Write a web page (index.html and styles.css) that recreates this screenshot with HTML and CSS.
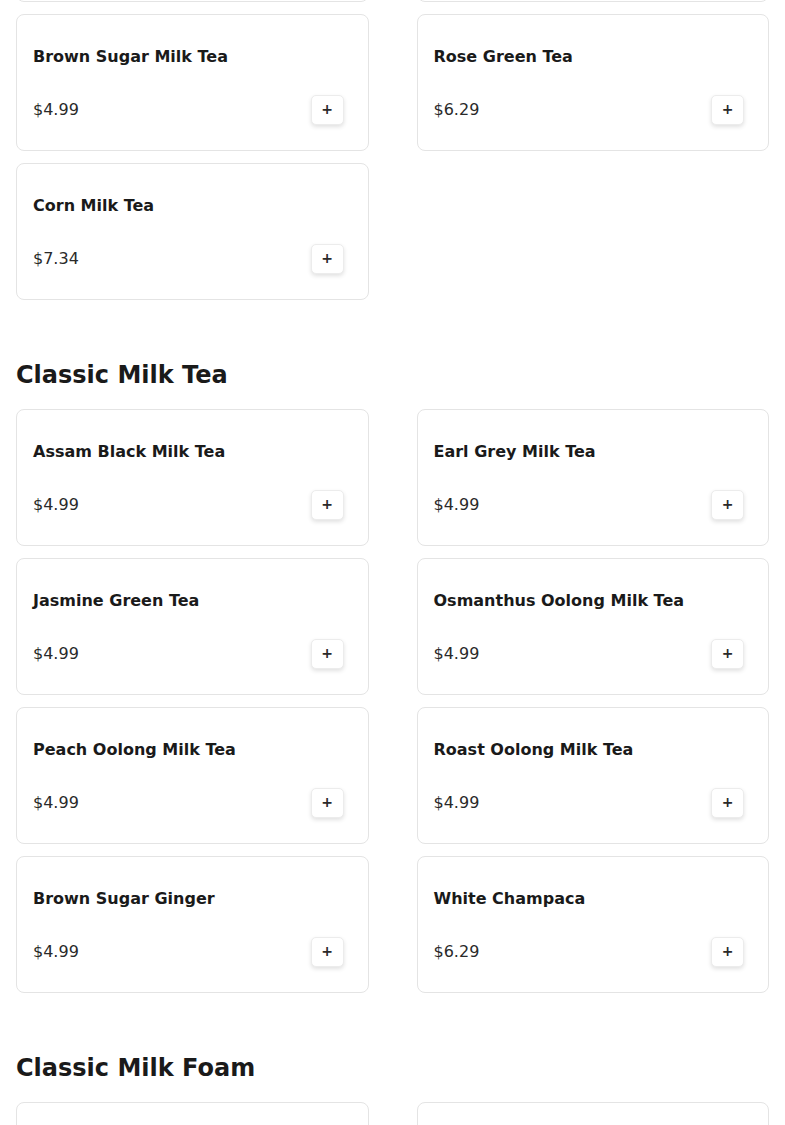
FILE: index.html
```html
<!DOCTYPE html>
<html lang="en">
<head>
<meta charset="utf-8">
<title>Menu</title>
<link rel="stylesheet" href="styles.css">
</head>
<body>
<main class="menu">
  <section class="section section-first">
    <div class="grid">
      <div class="card card-stub" aria-hidden="true"></div>
      <div class="card card-stub" aria-hidden="true"></div>
      <div class="card"><h3 class="name">Brown Sugar Milk Tea</h3><div class="row"><span class="price">$4.99</span><button class="add">+</button></div></div>
      <div class="card"><h3 class="name">Rose Green Tea</h3><div class="row"><span class="price">$6.29</span><button class="add">+</button></div></div>
      <div class="card"><h3 class="name">Corn Milk Tea</h3><div class="row"><span class="price">$7.34</span><button class="add">+</button></div></div>
    </div>
  </section>
  <section class="section">
    <h2 class="title">Classic Milk Tea</h2>
    <div class="grid">
      <div class="card"><h3 class="name">Assam Black Milk Tea</h3><div class="row"><span class="price">$4.99</span><button class="add">+</button></div></div>
      <div class="card"><h3 class="name">Earl Grey Milk Tea</h3><div class="row"><span class="price">$4.99</span><button class="add">+</button></div></div>
      <div class="card"><h3 class="name">Jasmine Green Tea</h3><div class="row"><span class="price">$4.99</span><button class="add">+</button></div></div>
      <div class="card"><h3 class="name">Osmanthus Oolong Milk Tea</h3><div class="row"><span class="price">$4.99</span><button class="add">+</button></div></div>
      <div class="card"><h3 class="name">Peach Oolong Milk Tea</h3><div class="row"><span class="price">$4.99</span><button class="add">+</button></div></div>
      <div class="card"><h3 class="name">Roast Oolong Milk Tea</h3><div class="row"><span class="price">$4.99</span><button class="add">+</button></div></div>
      <div class="card"><h3 class="name">Brown Sugar Ginger</h3><div class="row"><span class="price">$4.99</span><button class="add">+</button></div></div>
      <div class="card"><h3 class="name">White Champaca</h3><div class="row"><span class="price">$6.29</span><button class="add">+</button></div></div>
    </div>
  </section>
  <section class="section">
    <h2 class="title">Classic Milk Foam</h2>
    <div class="grid">
      <div class="card card-stub" aria-hidden="true"></div>
      <div class="card card-stub" aria-hidden="true"></div>
    </div>
  </section>
</main>
</body>
</html>
```
FILE: styles.css
```css
* { box-sizing: border-box; }
html, body { margin: 0; padding: 0; background: #ffffff; }
body {
  font-family: "DejaVu Sans", Verdana, sans-serif;
  color: #1a1a1a;
}
.menu {
  padding: 0 16px;
}
.section-first {
  margin-top: -135px;
}
.title {
  margin: 59px 0 18px;
  font-size: 24px;
  line-height: 32px;
  font-weight: bold;
  color: #1a1a1a;
}
.grid {
  display: grid;
  grid-template-columns: 1fr 1fr;
  column-gap: 48px;
  row-gap: 12px;
}
.card {
  height: 137px;
  border: 1px solid #e4e4e4;
  border-radius: 8px;
  background: #fff;
  padding: 30px 24px 24px 16px;
  display: flex;
  flex-direction: column;
  gap: 25px;
}
.name {
  margin: 0;
  font-size: 16px;
  line-height: 24px;
  font-weight: bold;
  color: #1a1a1a;
}
.row {
  display: flex;
  align-items: center;
  justify-content: space-between;
  height: 31px;
}
.price {
  font-size: 16px;
  line-height: 24px;
  color: #2a2a2a;
}
.add {
  width: 33px;
  height: 30px;
  padding: 0 0 1px;
  border: 1px solid #ececec;
  border-radius: 5px;
  background: #fff;
  box-shadow: 0 2px 4px rgba(0, 0, 0, 0.12);
  font-family: "DejaVu Sans", sans-serif;
  font-size: 14px;
  font-weight: bold;
  line-height: 26px;
  color: #2a2a2a;
  text-align: center;
  cursor: pointer;
}
```
